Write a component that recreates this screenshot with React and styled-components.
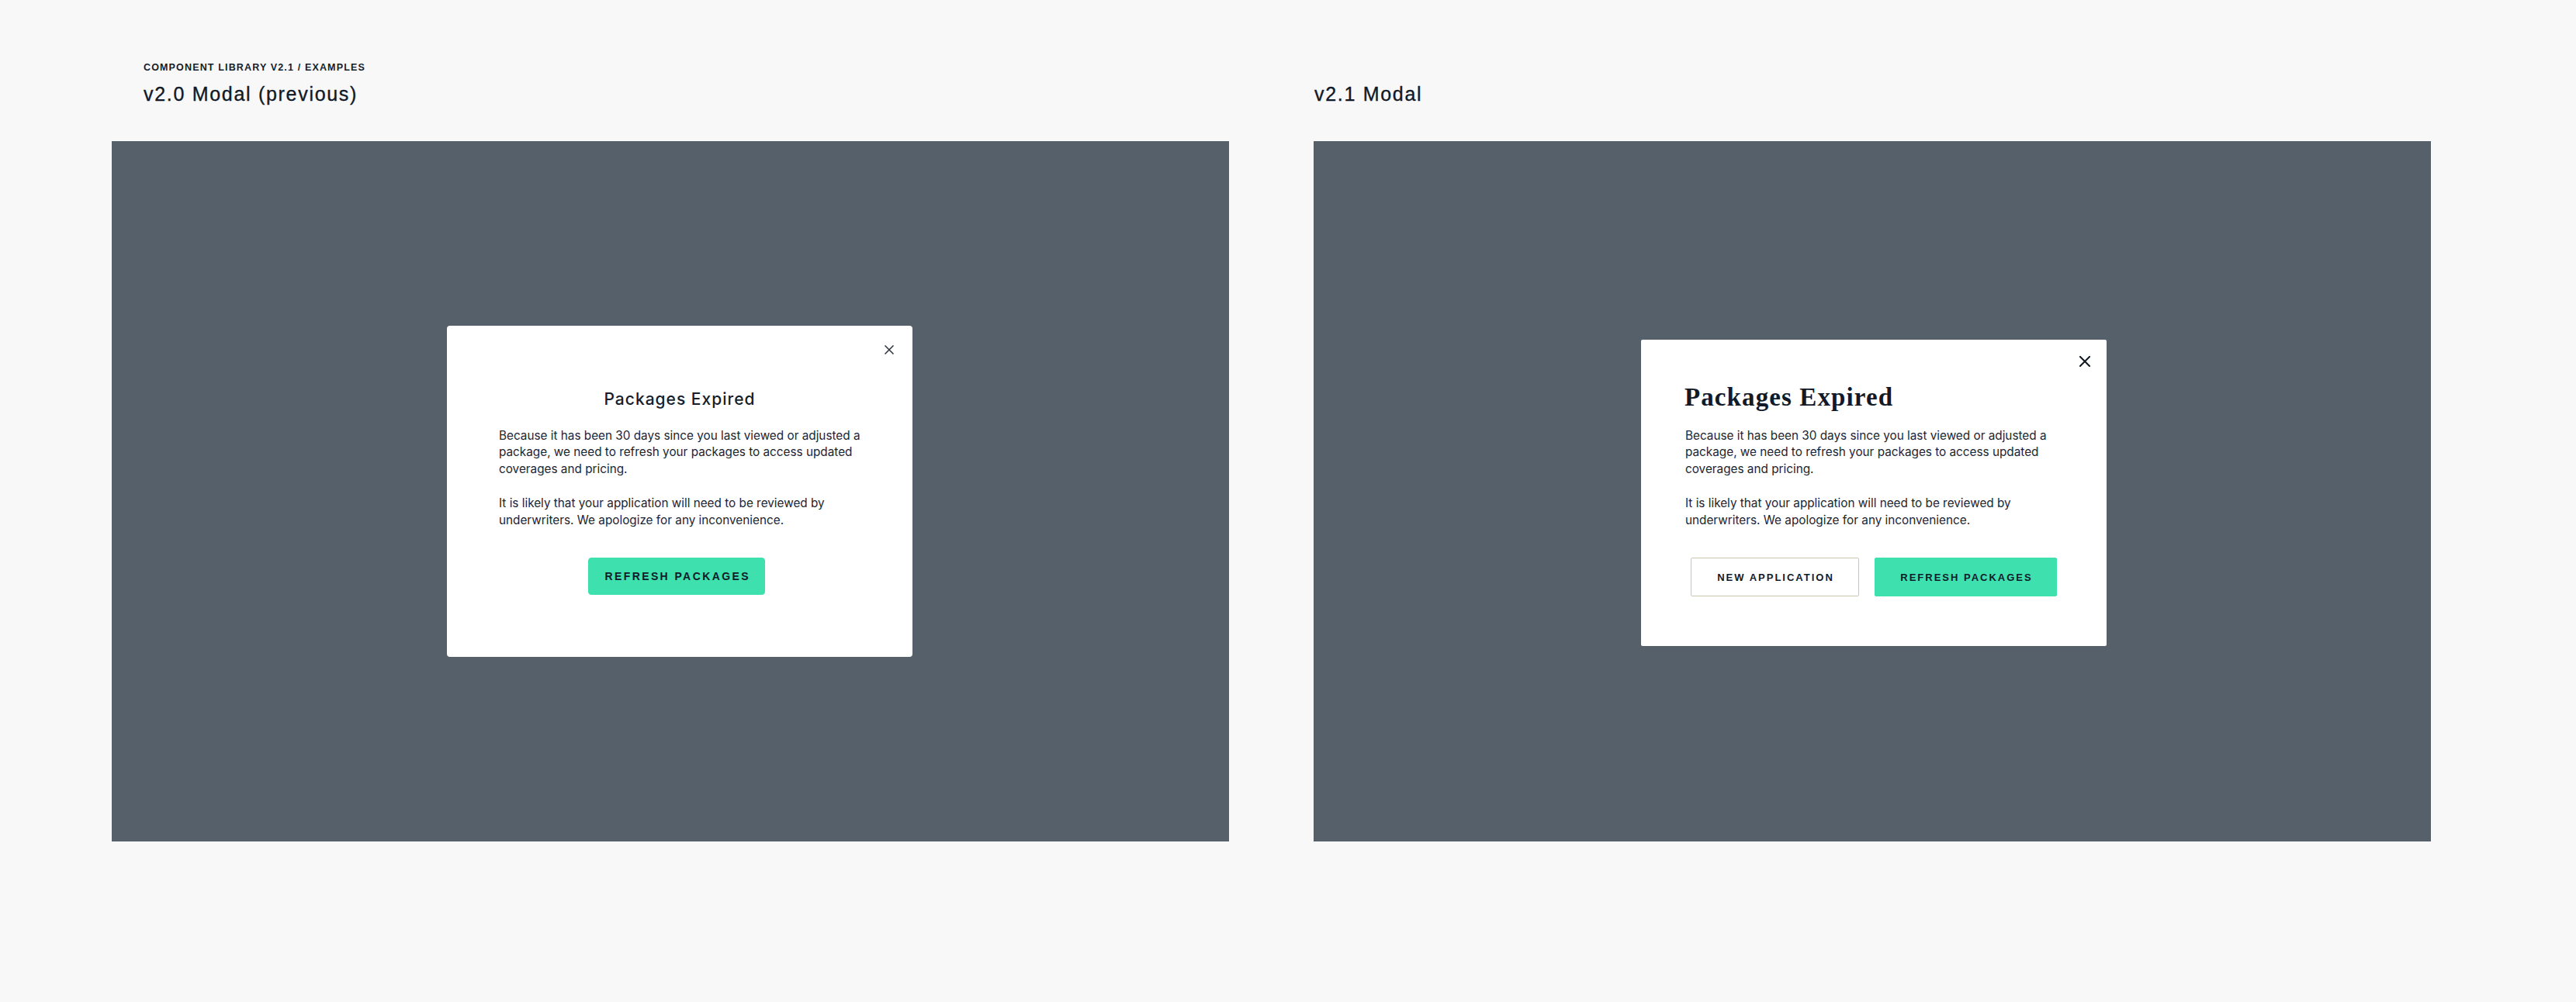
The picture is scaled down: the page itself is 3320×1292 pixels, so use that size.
import React from "react";
import styled, { createGlobalStyle } from "styled-components";

const GlobalStyle = createGlobalStyle`
  html, body { margin: 0; padding: 0; background: #f8f8f8; }
  * { box-sizing: border-box; }
`;

const Page = styled.main`
  display: flex;
  gap: 109px;
  padding: 79px 0 0 144px;
  min-height: 1292px;
  background: #f8f8f8;
  color: #141d2b;
`;

const Column = styled.section`
  display: flex;
  flex-direction: column;
  width: 1440px;
`;

const Header = styled.header`
  display: grid;
  grid-template-rows: 16px 28px;
  row-gap: 12px;
  align-content: start;
  height: 103px;
  padding-left: ${(p) => p.$indent}px;
`;

const Breadcrumb = styled.div`
  grid-row: 1;
  font-family: "Liberation Sans", Arial, sans-serif;
  font-weight: 700;
  font-size: 12.5px;
  line-height: 16px;
  letter-spacing: 1.15px;
  color: #141d2b;
`;

const SectionTitle = styled.h2`
  grid-row: 2;
  margin: 0;
  font-family: "Liberation Sans", Arial, sans-serif;
  font-weight: 400;
  font-size: 25px;
  line-height: 28px;
  letter-spacing: 1.7px;
  color: #101927;
  -webkit-text-stroke: 0.35px #101927;
  white-space: nowrap;
`;

const Backdrop = styled.div`
  height: 903px;
  background: #56606a;
  display: flex;
  align-items: center;
  justify-content: center;
  padding: ${(p) => p.$top}px 0 0 ${(p) => p.$left}px;
`;

const Modal = styled.div`
  position: relative;
  width: 600px;
  background: #ffffff;
  border-radius: ${(p) => (p.$v2 ? "2px" : "4px")};
  padding: ${(p) => (p.$v2 ? "54px 0 64px 57px" : "81px 0 80px 67px")};
  display: flex;
  flex-direction: column;
`;

const Close = styled.button`
  position: absolute;
  top: ${(p) => p.$top}px;
  right: ${(p) => p.$right}px;
  width: ${(p) => p.$size}px;
  height: ${(p) => p.$size}px;
  padding: 0;
  border: 0;
  background: transparent;
  display: flex;
  cursor: pointer;
  svg { display: block; }
`;

const OldTitle = styled.h3`
  margin: 0 0 22px -67px;
  width: 600px;
  text-align: center;
  font-family: Inter, "Open Sans", sans-serif;
  font-weight: 500;
  font-size: 21px;
  line-height: 28px;
  letter-spacing: 1px;
  color: #141d2b;
`;

const NewTitle = styled.h3`
  margin: 0 0 19px -1px;
  font-family: "Liberation Serif", "Times New Roman", serif;
  font-weight: 700;
  font-size: 33px;
  line-height: 40px;
  letter-spacing: 1.1px;
  color: #101a28;
`;

const Body = styled.div`
  width: 480px;
  display: flex;
  flex-direction: column;
  gap: 22px;
`;

const Para = styled.p`
  margin: 0;
  font-family: Inter, "Liberation Sans", sans-serif;
  font-size: 15.3px;
  line-height: 21.7px;
  color: #1c2533;
`;

const Actions = styled.div`
  margin: 38px 0 0 ${(p) => -p.$padLeft}px;
  width: 600px;
  display: flex;
  justify-content: center;
  gap: 20px;
`;

const Button = styled.button`
  display: inline-flex;
  align-items: center;
  justify-content: center;
  width: ${(p) => p.$w}px;
  height: ${(p) => p.$h}px;
  padding: 0;
  border-radius: ${(p) => p.$radius}px;
  border: 1px solid ${(p) => (p.$outline ? "#c9c7ae" : "#3ee0ae")};
  background: ${(p) => (p.$outline ? "#ffffff" : "#3ee0ae")};
  font-family: "Liberation Sans", Arial, sans-serif;
  font-weight: 700;
  font-size: ${(p) => p.$fs}px;
  letter-spacing: ${(p) => p.$ls}px;
  color: #111b29;
  cursor: pointer;
  span { margin-right: -${(p) => p.$ls}px; }
`;

const XIcon = ({ size, stroke, color }) => (
  <svg width={size} height={size} viewBox={`0 0 ${size} ${size}`} fill="none">
    <path
      d={`M1 1 L${size - 1} ${size - 1} M${size - 1} 1 L1 ${size - 1}`}
      stroke={color}
      strokeWidth={stroke}
      strokeLinecap="square"
    />
  </svg>
);

const Copy = () => (
  <Body>
    <Para>
      Because it has been 30 days since you last viewed or adjusted a package, we need to
      refresh your packages to access updated coverages and pricing.
    </Para>
    <Para>
      It is likely that your application will need to be reviewed by underwriters. We
      apologize for any inconvenience.
    </Para>
  </Body>
);

export default function App() {
  return (
    <>
      <GlobalStyle />
      <Page>
        <Column>
          <Header $indent={41}>
            <Breadcrumb>COMPONENT LIBRARY V2.1 / EXAMPLES</Breadcrumb>
            <SectionTitle>v2.0 Modal (previous)</SectionTitle>
          </Header>
          <Backdrop $top={0} $left={24}>
            <Modal>
              <Close $top={25} $right={24} $size={12} aria-label="Close">
                <XIcon size={12} stroke={1.5} color="#2b323b" />
              </Close>
              <OldTitle>Packages Expired</OldTitle>
              <Copy />
              <Actions $padLeft={71}>
                <Button $w={228} $h={48} $radius={4} $fs={14} $ls={2.4}>
                  <span>REFRESH PACKAGES</span>
                </Button>
              </Actions>
            </Modal>
          </Backdrop>
        </Column>
        <Column>
          <Header $indent={1}>
            <SectionTitle>v2.1 Modal</SectionTitle>
          </Header>
          <Backdrop $top={4} $left={4}>
            <Modal $v2>
              <Close $top={21} $right={21} $size={14} aria-label="Close">
                <XIcon size={14} stroke={2} color="#111820" />
              </Close>
              <NewTitle>Packages Expired</NewTitle>
              <Copy />
              <Actions $padLeft={57}>
                <Button $outline $w={217} $h={50} $radius={2} $fs={13} $ls={2}>
                  <span>NEW APPLICATION</span>
                </Button>
                <Button $w={235} $h={50} $radius={2} $fs={13} $ls={2}>
                  <span>REFRESH PACKAGES</span>
                </Button>
              </Actions>
            </Modal>
          </Backdrop>
        </Column>
      </Page>
    </>
  );
}
